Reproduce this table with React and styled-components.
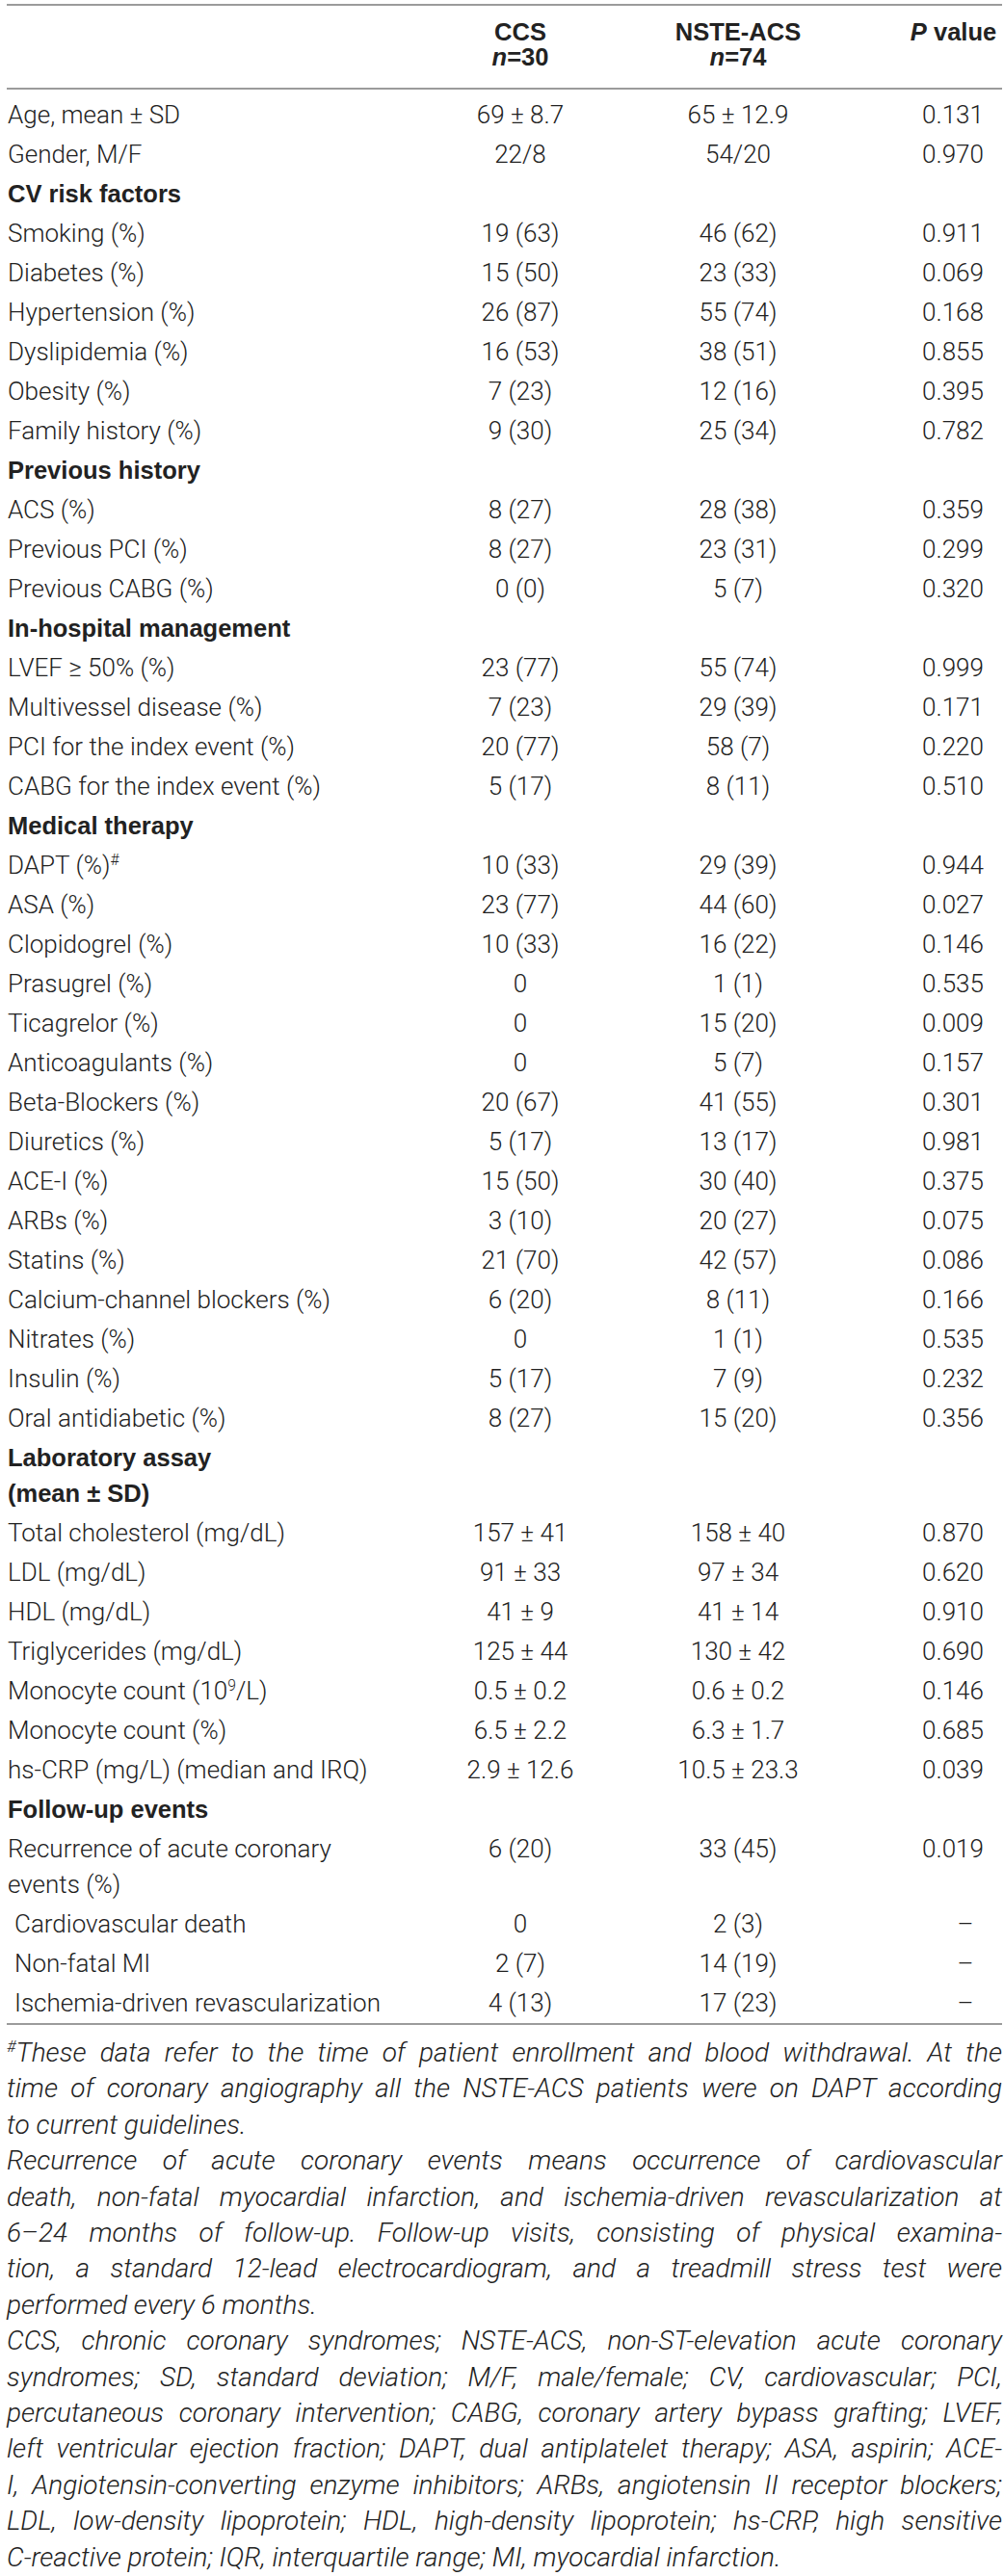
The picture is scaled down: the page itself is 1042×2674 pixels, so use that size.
import styled, { createGlobalStyle } from 'styled-components';

const GlobalStyle = createGlobalStyle`
  html, body { margin: 0; padding: 0; background: #fff; }
  body {
    font-family: Roboto, "Liberation Sans", Arial, sans-serif;
    font-weight: 300;
    color: #222;
  }
`;

const Page = styled.div`
  width: 1042px;
  box-sizing: border-box;
  padding: 4px 2px 0 7px;
`;

const Table = styled.table`
  width: 100%;
  border-collapse: collapse;
  table-layout: fixed;
  font-size: 26px;
`;

const Col = styled.col`
  width: ${(p) => p.$w}px;
`;

const Head = styled.thead`
  tr {
    border-top: 2px solid #9b9b9b;
    border-bottom: 2px solid #9b9b9b;
  }
`;

const HeadCell = styled.th`
  padding: 14px 0 19px ${(p) => (p.$p ? '80px' : '0')};
  font-family: "Liberation Sans", Arial, sans-serif;
  font-size: 25.5px;
  line-height: 26px;
  font-weight: 700;
  text-align: center;
  vertical-align: top;
  color: #222;
`;

const Body = styled.tbody`
  border-bottom: 2px solid #9b9b9b;

  td {
    padding-top: 2px;
    padding-bottom: 2px;
    line-height: 37px;
    vertical-align: top;
    white-space: nowrap;
  }

  tr:first-child td {
    padding-top: 8px;
  }
`;

const Label = styled.td`
  padding-left: ${(p) => (p.$sub ? '8px' : '1px')};
  text-align: left;
  && {
    white-space: normal;
  }
`;

const Section = styled.td`
  padding-left: 1px;
  text-align: left;
  font-family: "Liberation Sans", Arial, sans-serif;
  font-size: 25.5px;
  font-weight: 700;
  color: #222;
`;

const Value = styled.td`
  text-align: center;
`;

const PValue = styled.td`
  padding-left: ${(p) => (p.$dash ? '106px' : '80px')};
  text-align: center;
`;

const Sup = styled.sup`
  font-size: 0.6em;
  line-height: 0;
  vertical-align: 0.6em;
`;

const Notes = styled.div`
  margin-top: 10px;
  font-size: 28px;
  line-height: 37.4px;
  font-style: italic;
  color: #222;
`;

const Note = styled.p`
  margin: 0;
`;

const NoteLine = styled.span`
  display: block;
  text-align: ${(p) => (p.$last ? 'left' : 'justify')};
  text-align-last: ${(p) => (p.$last ? 'left' : 'justify')};
`;

const rows = [
  { label: 'Age, mean ± SD', ccs: '69 ± 8.7', acs: '65 ± 12.9', p: '0.131' },
  { label: 'Gender, M/F', ccs: '22/8', acs: '54/20', p: '0.970' },
  { section: 'CV risk factors' },
  { label: 'Smoking (%)', ccs: '19 (63)', acs: '46 (62)', p: '0.911' },
  { label: 'Diabetes (%)', ccs: '15 (50)', acs: '23 (33)', p: '0.069' },
  { label: 'Hypertension (%)', ccs: '26 (87)', acs: '55 (74)', p: '0.168' },
  { label: 'Dyslipidemia (%)', ccs: '16 (53)', acs: '38 (51)', p: '0.855' },
  { label: 'Obesity (%)', ccs: '7 (23)', acs: '12 (16)', p: '0.395' },
  { label: 'Family history (%)', ccs: '9 (30)', acs: '25 (34)', p: '0.782' },
  { section: 'Previous history' },
  { label: 'ACS (%)', ccs: '8 (27)', acs: '28 (38)', p: '0.359' },
  { label: 'Previous PCI (%)', ccs: '8 (27)', acs: '23 (31)', p: '0.299' },
  { label: 'Previous CABG (%)', ccs: '0 (0)', acs: '5 (7)', p: '0.320' },
  { section: 'In-hospital management' },
  { label: 'LVEF ≥ 50% (%)', ccs: '23 (77)', acs: '55 (74)', p: '0.999' },
  { label: 'Multivessel disease (%)', ccs: '7 (23)', acs: '29 (39)', p: '0.171' },
  { label: 'PCI for the index event (%)', ccs: '20 (77)', acs: '58 (7)', p: '0.220' },
  { label: 'CABG for the index event (%)', ccs: '5 (17)', acs: '8 (11)', p: '0.510' },
  { section: 'Medical therapy' },
  { label: <>DAPT (%)<Sup>#</Sup></>, ccs: '10 (33)', acs: '29 (39)', p: '0.944' },
  { label: 'ASA (%)', ccs: '23 (77)', acs: '44 (60)', p: '0.027' },
  { label: 'Clopidogrel (%)', ccs: '10 (33)', acs: '16 (22)', p: '0.146' },
  { label: 'Prasugrel (%)', ccs: '0', acs: '1 (1)', p: '0.535' },
  { label: 'Ticagrelor (%)', ccs: '0', acs: '15 (20)', p: '0.009' },
  { label: 'Anticoagulants (%)', ccs: '0', acs: '5 (7)', p: '0.157' },
  { label: 'Beta-Blockers (%)', ccs: '20 (67)', acs: '41 (55)', p: '0.301' },
  { label: 'Diuretics (%)', ccs: '5 (17)', acs: '13 (17)', p: '0.981' },
  { label: 'ACE-I (%)', ccs: '15 (50)', acs: '30 (40)', p: '0.375' },
  { label: 'ARBs (%)', ccs: '3 (10)', acs: '20 (27)', p: '0.075' },
  { label: 'Statins (%)', ccs: '21 (70)', acs: '42 (57)', p: '0.086' },
  { label: 'Calcium-channel blockers (%)', ccs: '6 (20)', acs: '8 (11)', p: '0.166' },
  { label: 'Nitrates (%)', ccs: '0', acs: '1 (1)', p: '0.535' },
  { label: 'Insulin (%)', ccs: '5 (17)', acs: '7 (9)', p: '0.232' },
  { label: 'Oral antidiabetic (%)', ccs: '8 (27)', acs: '15 (20)', p: '0.356' },
  { section: <>Laboratory assay<br />(mean ± SD)</> },
  { label: 'Total cholesterol (mg/dL)', ccs: '157 ± 41', acs: '158 ± 40', p: '0.870' },
  { label: 'LDL (mg/dL)', ccs: '91 ± 33', acs: '97 ± 34', p: '0.620' },
  { label: 'HDL (mg/dL)', ccs: '41 ± 9', acs: '41 ± 14', p: '0.910' },
  { label: 'Triglycerides (mg/dL)', ccs: '125 ± 44', acs: '130 ± 42', p: '0.690' },
  { label: <>Monocyte count (10<Sup>9</Sup>/L)</>, ccs: '0.5 ± 0.2', acs: '0.6 ± 0.2', p: '0.146' },
  { label: 'Monocyte count (%)', ccs: '6.5 ± 2.2', acs: '6.3 ± 1.7', p: '0.685' },
  { label: 'hs-CRP (mg/L) (median and IRQ)', ccs: '2.9 ± 12.6', acs: '10.5 ± 23.3', p: '0.039' },
  { section: 'Follow-up events' },
  { label: 'Recurrence of acute coronary events (%)', ccs: '6 (20)', acs: '33 (45)', p: '0.019' },
  { label: 'Cardiovascular death', ccs: '0', acs: '2 (3)', p: '–', sub: true },
  { label: 'Non-fatal MI', ccs: '2 (7)', acs: '14 (19)', p: '–', sub: true },
  { label: 'Ischemia-driven revascularization', ccs: '4 (13)', acs: '17 (23)', p: '–', sub: true },
];

// line breaks follow the printed footnote
const notes = [
  [
    <><Sup>#</Sup>These data refer to the time of patient enrollment and blood withdrawal. At the</>,
    'time of coronary angiography all the NSTE-ACS patients were on DAPT according',
    'to current guidelines.',
  ],
  [
    'Recurrence of acute coronary events means occurrence of cardiovascular',
    'death, non-fatal myocardial infarction, and ischemia-driven revascularization at',
    '6–24 months of follow-up. Follow-up visits, consisting of physical examina-',
    'tion, a standard 12-lead electrocardiogram, and a treadmill stress test were',
    'performed every 6 months.',
  ],
  [
    'CCS, chronic coronary syndromes; NSTE-ACS, non-ST-elevation acute coronary',
    'syndromes; SD, standard deviation; M/F, male/female; CV, cardiovascular; PCI,',
    'percutaneous coronary intervention; CABG, coronary artery bypass grafting; LVEF,',
    'left ventricular ejection fraction; DAPT, dual antiplatelet therapy; ASA, aspirin; ACE-',
    'I, Angiotensin-converting enzyme inhibitors; ARBs, angiotensin II receptor blockers;',
    'LDL, low-density lipoprotein; HDL, high-density lipoprotein; hs-CRP, high sensitive',
    'C-reactive protein; IQR, interquartile range; MI, myocardial infarction.',
  ],
];

function App() {
  return (
    <Page>
      <GlobalStyle />
      <Table>
        <colgroup>
          <Col $w={400} />
          <Col $w={266} />
          <Col $w={186} />
          <Col $w={181} />
        </colgroup>
        <Head>
          <tr>
            <HeadCell />
            <HeadCell>CCS<br /><i>n</i>=30</HeadCell>
            <HeadCell>NSTE-ACS<br /><i>n</i>=74</HeadCell>
            <HeadCell $p><i>P</i> value</HeadCell>
          </tr>
        </Head>
        <Body>
          {rows.map((r, i) =>
            r.section ? (
              <tr key={i}>
                <Section>{r.section}</Section>
                <Value />
                <Value />
                <PValue />
              </tr>
            ) : (
              <tr key={i}>
                <Label $sub={r.sub}>{r.label}</Label>
                <Value>{r.ccs}</Value>
                <Value>{r.acs}</Value>
                <PValue $dash={r.p === '–'}>{r.p}</PValue>
              </tr>
            )
          )}
        </Body>
      </Table>

      <Notes>
        {notes.map((para, i) => (
          <Note key={i}>
            {para.map((line, j) => (
              <NoteLine key={j} $last={j === para.length - 1}>{line}</NoteLine>
            ))}
          </Note>
        ))}
      </Notes>
    </Page>
  );
}

export default App;
